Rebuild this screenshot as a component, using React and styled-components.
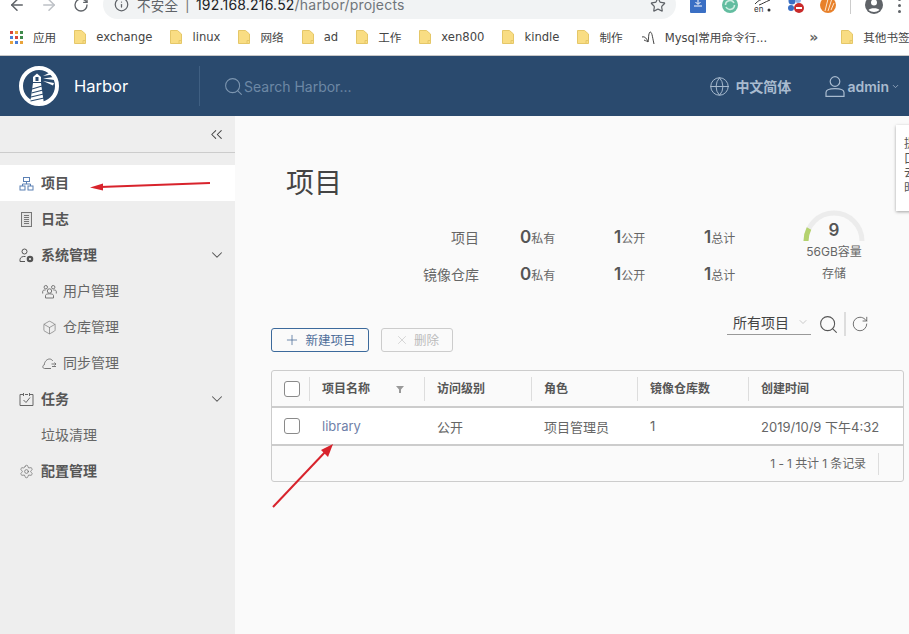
import styled, { createGlobalStyle } from "styled-components";
import {
  ArrowLeft,
  ArrowRight,
  Box,
  ChevronDown,
  ChevronsLeft,
  Globe,
  Info,
  Plus,
  RotateCw,
  Search,
  Settings,
  Star,
  X,
} from "lucide-react";

const FONT = `Inter, "Noto Sans CJK SC", sans-serif`;

const GlobalStyle = createGlobalStyle`
  html, body {
    margin: 0;
    padding: 0;
    height: 100%;
    overflow: hidden;
    background: #fafafa;
  }
  * { box-sizing: border-box; }
  svg { flex: none; }
`;

const bookmarks = [
  { name: "exchange" },
  { name: "linux" },
  { name: "网络" },
  { name: "ad" },
  { name: "工作" },
  { name: "xen800" },
  { name: "kindle" },
  { name: "制作" },
];

const Folder = () => (
  <svg width="12" height="14" viewBox="0 0 12 14">
    <path d="M0.5 0.5H7.5L11.5 4V13.5H0.5Z" fill="#f9dd83" stroke="#e5c768" />
    <path d="M9 13V10.5H11.5" fill="none" stroke="#e5c768" />
  </svg>
);

const AppsGrid = () => {
  const colors = ["#d9453c", "#e8a33b", "#3f8a4c", "#4a7fd8", "#d9453c", "#3f8a4c", "#e8a33b", "#4a7fd8", "#e8a33b"];
  return (
    <svg width="13" height="13" viewBox="0 0 13 13">
      {colors.map((c, i) => (
        <rect key={i} x={(i % 3) * 5} y={Math.floor(i / 3) * 5} width="3" height="3" fill={c} />
      ))}
    </svg>
  );
};

const Logo = () => (
  <svg width="42" height="42" viewBox="0 0 42 42">
    <circle cx="21" cy="21" r="18" fill="none" stroke="#fff" strokeWidth="4" />
    <path d="M12 39 L15 18 H23 L26 39 Z" fill="#fff" />
    <path d="M15 17 V12 L19 8.5 L23 12 V17 Z" fill="#fff" />
    <rect x="17.5" y="12" width="3" height="4" fill="#2a4a6e" />
    <path d="M14 24 L24 21 M13.5 28 L25 25 M13 32 L25.5 29 M12.5 36 L26 33" stroke="#2a4a6e" strokeWidth="1.2" />
    <path d="M25 11 L33 7 L34.5 9.5 Z M25 13.5 L36 12 L36.5 15 Z M25 16 L36 18 L35 20.5 Z" fill="#fff" />
  </svg>
);

const UserOutline = () => (
  <svg width="20" height="21" viewBox="0 0 20 21" fill="none" stroke="#a9bbcf" strokeWidth="1.2">
    <circle cx="10" cy="5.5" r="4.8" />
    <path d="M1 20.4V16.5C1 14 5 12.6 10 12.6S19 14 19 16.5V20.4Z" />
  </svg>
);

const ProjectsIcon = () => (
  <svg width="15" height="15" viewBox="0 0 15 15" fill="none" stroke="#5b80b4">
    <rect x="4.5" y="1.5" width="6" height="4" />
    <rect x="1" y="10" width="5" height="4" />
    <rect x="9" y="10" width="5" height="4" />
    <path d="M7.5 5.5V8M3.5 10V8H11.5V10" />
  </svg>
);

const LogsIcon = () => (
  <svg width="15" height="15" viewBox="0 0 15 15" fill="none" stroke="#777">
    <rect x="2.5" y="0.5" width="10" height="14" fill="#e4e4e4" />
    <path d="M5 3.5H10M5 5.5H10M5 7.5H10M5 9.5H10M5 11.5H10" />
  </svg>
);

const AdminIcon = () => (
  <svg width="15" height="15" viewBox="0 0 15 15" fill="none" stroke="#555">
    <circle cx="5.5" cy="3.5" r="2.5" />
    <path d="M1 13.5V11.5C1 9.5 3.5 8 6.5 8.5M1 13.5H6" />
    <circle cx="11" cy="11" r="2.2" strokeWidth="2.2" />
  </svg>
);

const UsersIcon = () => (
  <svg width="15" height="15" viewBox="0 0 15 15" fill="none" stroke="#777">
    <circle cx="7.5" cy="7" r="2.2" />
    <circle cx="3.8" cy="3.2" r="1.7" />
    <circle cx="11.2" cy="3.2" r="1.7" />
    <path d="M3.5 14V11.5C3.5 10.5 5 9.8 7.5 9.8S11.5 10.5 11.5 11.5V14ZM0.7 9.5V7.3C0.7 6.4 1.8 6 3.6 6M14.3 9.5V7.3C14.3 6.4 13.2 6 11.4 6" />
  </svg>
);

const SyncIcon = () => (
  <svg width="15" height="13" viewBox="0 0 15 13" fill="none" stroke="#777">
    <path d="M9 11.5H2.5C0.5 11.5 0.2 8.5 2.2 8C2.5 4.5 5 2 7.5 2C9.2 2 10.2 3 10.8 4" />
    <path d="M9.5 7H14M12.5 5.5L14 7L12.5 8.5M10 9.5H14" />
  </svg>
);

const TasksIcon = () => (
  <svg width="15" height="15" viewBox="0 0 15 15" fill="none" stroke="#666">
    <path d="M4 2.5H1V13.5H14V2.5H11M6 2.5H9M4.5 1V4M10.5 1V4" />
    <path d="M4.5 8L7 10.5L11 5.5" />
  </svg>
);

const FilterIcon = () => (
  <svg width="8" height="8" viewBox="0 0 8 8">
    <path d="M0 1H8L5 4.5V8H3V4.5Z" fill="#999" />
  </svg>
);

const Gauge = () => (
  <svg width="62" height="34" viewBox="0 0 62 34" fill="none">
    <path d="M3 33A28 28 0 0 1 59 33" stroke="#ececec" strokeWidth="5" />
    <path d="M3 33A28 28 0 0 1 6 20.5" stroke="#b4d26e" strokeWidth="5" />
  </svg>
);

const ExtensionCloud = () => (
  <svg width="16" height="16" viewBox="0 0 16 16">
    <rect width="16" height="16" rx="1" fill="#3a6fc4" />
    <path d="M8 2V7M5.5 5L8 7.5L10.5 5M4 9H12" stroke="#fff" fill="none" />
  </svg>
);

const ExtensionSync = () => (
  <svg width="16" height="16" viewBox="0 0 16 16">
    <circle cx="8" cy="8" r="8" fill="#63bda0" />
    <path d="M3.5 8A4.5 4.5 0 0 1 12 6M12.5 8A4.5 4.5 0 0 1 4 10" stroke="#cfeee2" strokeWidth="1.6" fill="none" />
  </svg>
);

const ExtensionSwirl = () => (
  <svg width="18" height="16" viewBox="0 0 18 16" fill="none">
    <path d="M1 7C4 4 6 2 11 2S16 1 17 0M5 8C8 7 11 5 16 3" stroke="#333" />
    <text x="0" y="15" fontSize="8" fontFamily="Inter, sans-serif" fill="#333">en</text>
    <circle cx="15" cy="13" r="1.5" fill="#333" />
  </svg>
);

const ExtensionBlock = () => (
  <svg width="16" height="16" viewBox="0 0 16 16">
    <circle cx="4" cy="4" r="3.5" fill="#3a6fc4" />
    <circle cx="3" cy="11" r="3" fill="#3a6fc4" />
    <circle cx="10" cy="3" r="3" fill="#8fb2e8" />
    <circle cx="11" cy="11" r="5" fill="#c92b2b" />
    <rect x="8" y="10" width="6" height="2" fill="#fff" />
  </svg>
);

const ExtensionOrange = () => (
  <svg width="16" height="16" viewBox="0 0 16 16" fill="none">
    <circle cx="8" cy="8" r="8" fill="#e8812b" />
    <path d="M5 14L8 2M8 14L11.5 3M11 13L14 6" stroke="#fbe6d0" />
  </svg>
);

const MysqlIcon = () => (
  <svg width="15" height="15" viewBox="0 0 15 15" fill="none" stroke="#444">
    <path d="M1 7C4 6 6 9 7 12C8 8 7 4 9 2C11 2 11 5 13 14" />
    <path d="M3 10C5 11 6 11 7 12" />
  </svg>
);

const Avatar = () => (
  <svg width="20" height="20" viewBox="0 0 20 20">
    <circle cx="10" cy="10" r="9" fill="#5f6368" />
    <circle cx="10" cy="7.5" r="3" fill="#fff" />
    <path d="M4.5 15C6 12.5 14 12.5 15.5 15C12.5 17.5 7.5 17.5 4.5 15Z" fill="#fff" />
  </svg>
);

const Annotations = () => (
  <Overlay viewBox="0 0 909 634">
    <path d="M210 183 L100 187" stroke="#d8232c" strokeWidth="2" />
    <path d="M90 187.5 L103 183.5 L103 190.5 Z" fill="#d8232c" />
    <path d="M273 507 L327 450" stroke="#d8232c" strokeWidth="2" />
    <path d="M333 444 L328 457 L321 450 Z" fill="#d8232c" />
  </Overlay>
);

const App = () => {
  return (
    <Page>
      <GlobalStyle />
      <Toolbar>
        <ToolbarInner>
          <NavIcon><ArrowLeft size={18} color="#5f6368" strokeWidth={2} /></NavIcon>
          <NavIcon><ArrowRight size={18} color="#bdc1c6" strokeWidth={2} /></NavIcon>
          <NavIcon><RotateCw size={16} color="#5f6368" strokeWidth={2} /></NavIcon>
          <Omnibox>
            <Info size={15} color="#5f6368" />
            <Insecure>不安全</Insecure>
            <Pipe>|</Pipe>
            <Url>
              192.168.216.52<UrlPath>/harbor/projects</UrlPath>
            </Url>
            <OmniStar><Star size={16} color="#5f6368" strokeWidth={1.8} /></OmniStar>
          </Omnibox>
          <Extensions>
            <ExtensionCloud />
            <ExtensionSync />
            <ExtensionSwirl />
            <ExtensionBlock />
            <ExtensionOrange />
          </Extensions>
          <ToolbarDivider />
          <Avatar />
          <Dots>
            <i />
            <i />
            <i />
          </Dots>
        </ToolbarInner>
      </Toolbar>

      <BookmarkBar>
        <AppsGrid />
        <AppsLabel>应用</AppsLabel>
        {bookmarks.map((b) => (
          <Bookmark key={b.name}>
            <Folder />
            <span>{b.name}</span>
          </Bookmark>
        ))}
        <Bookmark>
          <MysqlIcon />
          <MysqlLabel>Mysql常用命令行...</MysqlLabel>
        </Bookmark>
        <More>»</More>
        <BookmarkDivider />
        <Bookmark>
          <Folder />
          <span>其他书签</span>
        </Bookmark>
      </BookmarkBar>

      <Header>
        <Brand>
          <Logo />
          <BrandName>Harbor</BrandName>
        </Brand>
        <HeaderSearch>
          <Search size={21} color="#7d96b0" strokeWidth={1.2} />
          <SearchText>Search Harbor...</SearchText>
        </HeaderSearch>
        <HeaderRight>
          <HeaderAction $gap={5}>
            <Globe size={21} color="#a9bbcf" strokeWidth={1.1} />
            <HeaderLabel>中文简体</HeaderLabel>
          </HeaderAction>
          <HeaderAction $gap={2}>
            <UserOutline />
            <HeaderLabel>admin</HeaderLabel>
            <ChevronDown size={9} color="#a9bbcf" />
          </HeaderAction>
        </HeaderRight>
      </Header>

      <Body>
        <Sidebar>
          <Collapse>
            <ChevronsLeft size={19} color="#444" strokeWidth={1.3} />
          </Collapse>
          <Nav>
            <NavItem $active>
              <ProjectsIcon />
              <NavText>项目</NavText>
            </NavItem>
            <NavItem>
              <LogsIcon />
              <NavText>日志</NavText>
            </NavItem>
            <NavItem>
              <AdminIcon />
              <NavText>系统管理</NavText>
              <NavChevron><ChevronDown size={18} color="#555" strokeWidth={1.4} /></NavChevron>
            </NavItem>
            <SubItem>
              <UsersIcon />
              <SubText>用户管理</SubText>
            </SubItem>
            <SubItem>
              <Box size={15} color="#777" strokeWidth={1.1} />
              <SubText>仓库管理</SubText>
            </SubItem>
            <SubItem>
              <SyncIcon />
              <SubText>同步管理</SubText>
            </SubItem>
            <NavItem>
              <TasksIcon />
              <NavText>任务</NavText>
              <NavChevron><ChevronDown size={18} color="#555" strokeWidth={1.4} /></NavChevron>
            </NavItem>
            <PlainSubItem>
              <SubText>垃圾清理</SubText>
            </PlainSubItem>
            <NavItem>
              <Settings size={15} color="#666" strokeWidth={1.1} />
              <NavText>配置管理</NavText>
            </NavItem>
          </Nav>
        </Sidebar>

        <Main>
          <Title>项目</Title>
          <Summary>
            <StatsGrid>
              <StatLabel>项目</StatLabel>
              <Stat><b>0</b>私有</Stat>
              <Stat><b>1</b>公开</Stat>
              <Stat><b>1</b>总计</Stat>
              <StatLabel>镜像仓库</StatLabel>
              <Stat><b>0</b>私有</Stat>
              <Stat><b>1</b>公开</Stat>
              <Stat><b>1</b>总计</Stat>
            </StatsGrid>
            <SummaryDivider />
            <Storage>
              <GaugeBox>
                <Gauge />
                <GaugeValue>9</GaugeValue>
              </GaugeBox>
              <Capacity>56GB容量</Capacity>
              <StorageLabel>存储</StorageLabel>
            </Storage>
          </Summary>

          <Actions>
            <Buttons>
              <PrimaryButton>
                <Plus size={16} strokeWidth={1.2} />
                <ButtonText>新建项目</ButtonText>
              </PrimaryButton>
              <DisabledButton>
                <X size={14} strokeWidth={1} />
                <ButtonText>删除</ButtonText>
              </DisabledButton>
            </Buttons>
            <Filters>
              <Select>
                所有项目
                <ChevronDown size={12} color="#999" strokeWidth={1} />
              </Select>
              <Search size={21} color="#555" strokeWidth={1.2} />
              <FilterDivider />
              <RotateCw size={18} color="#555" strokeWidth={1.1} />
            </Filters>
          </Actions>

          <Table>
            <HeadRow>
              <HeadCell><Checkbox /></HeadCell>
              <HeadCell>
                <HeadText>项目名称</HeadText>
                <FilterSlot><FilterIcon /></FilterSlot>
              </HeadCell>
              <HeadCell><HeadText>访问级别</HeadText></HeadCell>
              <HeadCell><HeadText>角色</HeadText></HeadCell>
              <HeadCell><HeadText>镜像仓库数</HeadText></HeadCell>
              <HeadCell><HeadText>创建时间</HeadText></HeadCell>
            </HeadRow>
            <DataRow>
              <DataCell><Checkbox /></DataCell>
              <DataCell><ProjectLink>library</ProjectLink></DataCell>
              <DataCell>公开</DataCell>
              <DataCell>项目管理员</DataCell>
              <DataCell>1</DataCell>
              <DataCell>2019/10/9 下午4:32</DataCell>
            </DataRow>
            <TableFooter>
              <FooterText>1 - 1 共计 1 条记录</FooterText>
              <FooterDivider />
            </TableFooter>
          </Table>
        </Main>
      </Body>

      <Floater>
        <span>提</span>
        <span>口</span>
        <span>去</span>
        <span>时</span>
      </Floater>
      <Annotations />
    </Page>
  );
};

const Page = styled.div`
  position: relative;
  width: 909px;
  height: 634px;
  overflow: hidden;
  font-family: ${FONT};
  display: flex;
  flex-direction: column;
`;
const Overlay = styled.svg`
  position: absolute;
  inset: 0;
  width: 909px;
  height: 634px;
  pointer-events: none;
`;
const Toolbar = styled.div`
  height: 19px;
  background: #fff;
  overflow: hidden;
  flex: none;
`;
const ToolbarInner = styled.div`
  height: 30px;
  margin-top: -10px;
  display: flex;
  align-items: center;
  padding-left: 1px;
`;
const NavIcon = styled.div`
  width: 32px;
  display: flex;
  justify-content: center;
`;
const Omnibox = styled.div`
  width: 573px;
  height: 29px;
  margin-left: 6px;
  margin-top: -1px;
  background: #f1f3f4;
  border-radius: 15px;
  display: flex;
  align-items: center;
  padding-left: 11px;
  font-size: 14px;
  letter-spacing: 0.2px;
`;
const Insecure = styled.span`
  margin-left: 8px;
  color: #5f6368;
  font-size: 13.5px;
`;
const Pipe = styled.span`
  margin: 0 6px 0 7px;
  color: #777;
`;
const Url = styled.span`
  color: #202124;
`;
const UrlPath = styled.span`
  color: #70757a;
`;
const OmniStar = styled.div`
  margin-left: auto;
  margin-right: 10px;
  display: flex;
`;
const Extensions = styled.div`
  margin-left: 14px;
  display: flex;
  align-items: center;
  gap: 16px;
`;
const ToolbarDivider = styled.div`
  width: 1px;
  height: 18px;
  margin: 0 13px 0 14px;
  background: #ccc;
`;
const Dots = styled.div`
  margin-left: 14px;
  display: flex;
  flex-direction: column;
  gap: 3px;
  i {
    width: 3px;
    height: 3px;
    border-radius: 50%;
    background: #5f6368;
  }
`;
const BookmarkBar = styled.div`
  height: 37px;
  flex: none;
  background: #fff;
  border-bottom: 1px solid #c8c8c8;
  display: flex;
  align-items: center;
  padding-left: 10px;
  gap: 18px;
  font-family: "DejaVu Sans", "Noto Sans CJK SC", sans-serif;
  font-size: 11.6px;
  color: #444;
  white-space: nowrap;
`;
const AppsLabel = styled.span`
  margin-left: -8px;
`;
const Bookmark = styled.div`
  flex: none;
  display: flex;
  align-items: center;
  gap: 10px;
`;
const MysqlLabel = styled.span`
  margin-left: -1px;
`;
const More = styled.span`
  margin-left: 24px;
  font-size: 14px;
  font-weight: 700;
  color: #666;
`;
const BookmarkDivider = styled.div`
  width: 1px;
  height: 16px;
  margin: 0 -6px 0 -7px;
  background: #ccc;
`;
const Header = styled.header`
  height: 60px;
  flex: none;
  background: #2a4a6e;
  display: flex;
  align-items: center;
`;
const Brand = styled.div`
  width: 200px;
  height: 40px;
  padding-left: 18px;
  border-right: 1px solid #3f5f82;
  display: flex;
  align-items: center;
  gap: 14px;
`;
const BrandName = styled.span`
  color: #fff;
  font-size: 16.5px;
`;
const HeaderSearch = styled.div`
  margin-left: 23px;
  display: flex;
  align-items: center;
  gap: 0;
`;
const SearchText = styled.span`
  font-size: 14px;
  color: #6d88a5;
`;
const HeaderRight = styled.div`
  margin-left: auto;
  padding-right: 9px;
  display: flex;
  align-items: center;
  gap: 34px;
`;
const HeaderAction = styled.div`
  display: flex;
  align-items: center;
  gap: ${(p) => p.$gap}px;
`;
const HeaderLabel = styled.span`
  color: #a9bbcf;
  font-size: 14px;
  font-weight: 600;
`;
const Body = styled.div`
  flex: 1;
  display: flex;
  min-height: 0;
`;
const Sidebar = styled.aside`
  width: 235px;
  flex: none;
  background: #eeeeee;
`;
const Collapse = styled.div`
  height: 37px;
  border-bottom: 1px solid #ccc;
  display: flex;
  align-items: center;
  justify-content: flex-end;
  padding-right: 9px;
`;
const Nav = styled.nav`
  margin-top: 12px;
`;
const NavItem = styled.div`
  height: 36px;
  padding-left: 19px;
  padding-right: 9px;
  display: flex;
  align-items: center;
  gap: 7px;
  background: ${(p) => (p.$active ? "#fff" : "transparent")};
`;
const NavText = styled.span`
  margin-top: -2px;
  font-size: 14px;
  font-weight: 600;
  color: #565656;
`;
const NavChevron = styled.div`
  margin-left: auto;
  display: flex;
`;
const SubItem = styled.div`
  height: 36px;
  padding-left: 42px;
  display: flex;
  align-items: center;
  gap: 6px;
`;
const SubText = styled.span`
  margin-top: -2px;
  font-size: 14px;
  color: #666;
`;
const PlainSubItem = styled.div`
  height: 36px;
  padding-left: 41px;
  display: flex;
  align-items: center;
`;
const Main = styled.main`
  flex: 1;
  min-width: 0;
  background: #fafafa;
  padding: 47px 5px 0 36px;
  display: flex;
  flex-direction: column;
`;
const Title = styled.h1`
  margin: 0;
  height: 40px;
  padding-left: 15px;
  font-size: 28px;
  line-height: 40px;
  font-weight: 400;
  color: #444;
`;
const Summary = styled.div`
  margin-top: 5px;
  height: 83px;
  padding-left: 144px;
  display: flex;
  align-items: flex-start;
`;
const StatsGrid = styled.div`
  margin-top: 10px;
  display: grid;
  grid-template-columns: 105px 94px 90px 55px;
  grid-auto-rows: 37px;
  align-items: center;
`;
const StatLabel = styled.div`
  padding-right: 41px;
  text-align: right;
  font-size: 14px;
  color: #666;
`;
const Stat = styled.div`
  font-size: 12px;
  color: #666;
  b {
    font-size: 17px;
    font-weight: 600;
    color: #555;
  }
`;
const SummaryDivider = styled.div`
  width: 2px;
  height: 54px;
  margin-top: 11px;
  background: #ddd;
`;
const Storage = styled.div`
  flex: none;
  width: 150px;
  display: flex;
  flex-direction: column;
  align-items: center;
`;
const GaugeBox = styled.div`
  position: relative;
  height: 36px;
  display: flex;
`;
const GaugeValue = styled.span`
  position: absolute;
  left: 0;
  right: 0;
  top: 10px;
  text-align: center;
  font-size: 17px;
  line-height: 24px;
  font-weight: 600;
  color: #555;
`;
const Capacity = styled.span`
  font-size: 12px;
  line-height: 16px;
  color: #666;
`;
const StorageLabel = styled.span`
  margin-top: 6px;
  font-size: 12px;
  line-height: 16px;
  color: #666;
`;
const Actions = styled.div`
  margin-top: 21px;
  height: 40px;
  display: flex;
  justify-content: space-between;
`;
const Buttons = styled.div`
  align-self: flex-end;
  display: flex;
  gap: 12px;
`;
const BaseButton = styled.button`
  height: 24px;
  padding: 0;
  background: transparent;
  border-radius: 3px;
  font-family: ${FONT};
  font-size: 12.5px;
  display: flex;
  align-items: center;
  justify-content: center;
  gap: 5px;
`;
const ButtonText = styled.span`
  margin-top: -2px;
`;
const PrimaryButton = styled(BaseButton)`
  width: 98px;
  border: 1px solid #3c6a9c;
  color: #4f6f9a;
`;
const DisabledButton = styled(BaseButton)`
  width: 72px;
  border: 1px solid #ccc;
  color: #bbb;
`;
const Filters = styled.div`
  height: 24px;
  padding-right: 35px;
  display: flex;
  align-items: center;
`;
const Select = styled.div`
  width: 84px;
  height: 22px;
  padding: 0 0 3px 6px;
  margin-right: 7px;
  border-bottom: 1px solid #999;
  display: flex;
  align-items: center;
  gap: 8px;
  font-size: 14px;
  color: #444;
`;
const FilterDivider = styled.div`
  width: 2px;
  height: 24px;
  margin: 0 5px;
  background: #ddd;
`;
const Table = styled.div`
  margin-top: 18px;
  height: 112px;
  border: 1px solid #ccc;
  border-radius: 3px;
  background: #fafafa;
  display: flex;
  flex-direction: column;
`;
const columns = "38px 115px 107px 106px 111px 1fr";
const HeadRow = styled.div`
  height: 37px;
  flex: none;
  display: grid;
  grid-template-columns: ${columns};
  align-items: center;
  border-bottom: 2px solid #ccc;
`;
const HeadCell = styled.div`
  height: 24px;
  padding-left: 12px;
  border-right: 1px solid #ddd;
  display: flex;
  align-items: center;
  &:last-child {
    border-right: none;
  }
`;
const HeadText = styled.span`
  margin-top: -3px;
  font-size: 12px;
  font-weight: 600;
  color: #565656;
`;
const FilterSlot = styled.div`
  margin-left: auto;
  margin-right: 20px;
  display: flex;
`;
const DataRow = styled.div`
  height: 38px;
  flex: none;
  display: grid;
  grid-template-columns: ${columns};
  align-items: center;
  background: #fff;
  border-bottom: 2px solid #ccc;
`;
const DataCell = styled.div`
  padding-left: 12px;
  display: flex;
  align-items: center;
  font-size: 13px;
  color: #666;
`;
const Checkbox = styled.div`
  width: 16px;
  height: 16px;
  border: 1px solid #8a8a8a;
  border-radius: 3px;
  background: #fff;
`;
const ProjectLink = styled.span`
  color: #6f7fa8;
`;
const TableFooter = styled.div`
  flex: 1;
  padding-right: 24px;
  display: flex;
  align-items: center;
  justify-content: flex-end;
  font-size: 12px;
  color: #666;
`;
const FooterText = styled.span`
  margin-top: -2px;
  letter-spacing: -0.1px;
`;
const FooterDivider = styled.div`
  width: 1px;
  height: 22px;
  margin-left: 12px;
  background: #ddd;
`;
const Floater = styled.div`
  position: absolute;
  top: 125px;
  left: 896px;
  width: 20px;
  height: 86px;
  padding: 12px 0 0 8px;
  background: #fff;
  box-shadow: 0 1px 3px rgba(0, 0, 0, 0.35);
  display: flex;
  flex-direction: column;
  font-size: 12px;
  line-height: 14.5px;
  color: #555;
`;

export default App;
